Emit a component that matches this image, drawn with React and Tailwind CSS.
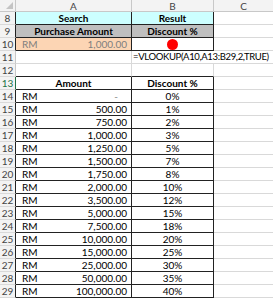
import React from 'react';

const rows = [
  [14, '-', '0%'],
  [15, '500.00', '1%'],
  [16, '750.00', '2%'],
  [17, '1,000.00', '3%'],
  [18, '1,250.00', '5%'],
  [19, '1,500.00', '7%'],
  [20, '1,750.00', '8%'],
  [21, '2,000.00', '10%'],
  [22, '3,500.00', '12%'],
  [23, '5,000.00', '15%'],
  [24, '7,500.00', '18%'],
  [25, '10,000.00', '20%'],
  [26, '15,000.00', '25%'],
  [27, '25,000.00', '30%'],
  [28, '50,000.00', '35%'],
  [29, '100,000.00', '40%'],
];

function RowNum({ n, cls = 'border-r-[#c8c8c8] text-[#444]' }) {
  return (
    <div className={`w-[16px] shrink-0 h-full bg-[#f3f3f3] border-r border-b border-b-[#d9d9d9] flex items-center justify-center text-[10px] ${cls}`}>
      {n}
    </div>
  );
}

export default function App() {
  return (
    <div className="w-[273px] h-[300px] overflow-hidden bg-white text-[10px] leading-none text-black" style={{ fontFamily: 'Lato, "Open Sans", sans-serif' }}>
      {/* column headers */}
      <div className="flex h-[12px]">
        <div className="w-[16px] shrink-0 bg-[#f3f3f3] border-r border-b border-[#c8c8c8] relative">
          <div className="absolute right-[2px] bottom-[2px] w-0 h-0 border-l-[7px] border-l-transparent border-b-[7px] border-b-[#c4c4c4]" />
        </div>
        <div className="w-[116px] shrink-0 bg-[#f3f3f3] border-r border-b border-[#c8c8c8] flex items-center justify-center text-[#444]">A</div>
        <div className="w-[82px] shrink-0 bg-[#f3f3f3] border-r border-b border-[#c8c8c8] flex items-center justify-center text-[#444]">B</div>
        <div className="flex-1 bg-[#f3f3f3] border-b border-[#c8c8c8] flex items-center justify-center text-[#444]">C</div>
      </div>

      {/* row 8 */}
      <div className="flex h-[13px]">
        <RowNum n={8} cls="border-r-[#222] text-[#444]" />
        <div className="w-[116px] shrink-0 bg-[#ccffff] border-r border-b border-[#222] flex items-center justify-center font-bold">Search</div>
        <div className="w-[82px] shrink-0 bg-[#ccffff] border-r border-b border-[#222] flex items-center justify-center font-bold">Result</div>
        <div className="flex-1 border-b border-[#d9d9d9]" />
      </div>

      {/* row 9 */}
      <div className="flex h-[13px]">
        <RowNum n={9} cls="border-r-[#222] text-[#444]" />
        <div className="w-[116px] shrink-0 bg-[#bfbfbf] border-r border-b border-[#222] flex items-center justify-center font-bold">Purchase Amount</div>
        <div className="w-[82px] shrink-0 bg-[#bfbfbf] border-r border-b border-[#222] flex items-center justify-center font-bold">Discount %</div>
        <div className="flex-1 border-b border-[#d9d9d9]" />
      </div>

      {/* row 10 */}
      <div className="flex h-[13px]">
        <RowNum n={10} cls="border-r-[#222] text-[#444]" />
        <div className="w-[116px] shrink-0 bg-[#fcd5b4] border-r border-b border-[#222] flex items-center justify-between pl-[6px] pr-[4px] text-[#7f7f7f]">
          <span>RM</span>
          <span>1,000.00</span>
        </div>
        <div className="w-[82px] shrink-0 border-r border-b border-[#222] flex items-center justify-center">
          <div className="w-[11px] h-[11px] rounded-full bg-[#ff0000]" />
        </div>
        <div className="flex-1 border-b border-[#d9d9d9]" />
      </div>

      {/* row 11 */}
      <div className="flex h-[13px]">
        <RowNum n={11} />
        <div className="w-[116px] shrink-0 border-r border-b border-[#d9d9d9]" />
        <div className="flex-1 border-b border-[#d9d9d9] flex items-center pl-[1px] whitespace-nowrap text-[9.5px] tracking-[-0.35px]">=VLOOKUP(A10,A13:B29,2,TRUE)</div>
      </div>

      {/* row 12 */}
      <div className="flex h-[13px]">
        <RowNum n={12} />
        <div className="w-[116px] shrink-0 border-r border-r-[#d9d9d9] border-b border-b-[#222]" />
        <div className="w-[82px] shrink-0 border-r border-r-[#d9d9d9] border-b border-b-[#222]" />
        <div className="flex-1 border-b border-[#d9d9d9]" />
      </div>

      {/* row 13 */}
      <div className="flex h-[13px]">
        <RowNum n={13} cls="border-r-[#217346] text-[#217346] bg-[#e1e1e1]" />
        <div className="w-[116px] shrink-0 border-r border-b border-[#222] flex items-center justify-center font-bold">Amount</div>
        <div className="w-[82px] shrink-0 border-r border-b border-[#222] flex items-center justify-center font-bold">Discount %</div>
        <div className="flex-1 border-b border-[#d9d9d9]" />
      </div>

      {rows.map(([n, amt, pct]) => (
        <div key={n} className="flex h-[13px]">
          <RowNum n={n} cls="border-r-[#222] text-[#444]" />
          <div className="w-[116px] shrink-0 border-r border-b border-[#222] flex items-center justify-between pl-[6px] pr-[4px]">
            <span>RM</span>
            {amt === '-' ? <span className="pr-[9px] text-[#888]">-</span> : <span>{amt}</span>}
          </div>
          <div className="w-[82px] shrink-0 border-r border-b border-[#222] flex items-center justify-center">{pct}</div>
          <div className="flex-1 border-b border-[#d9d9d9]" />
        </div>
      ))}
    </div>
  );
}
